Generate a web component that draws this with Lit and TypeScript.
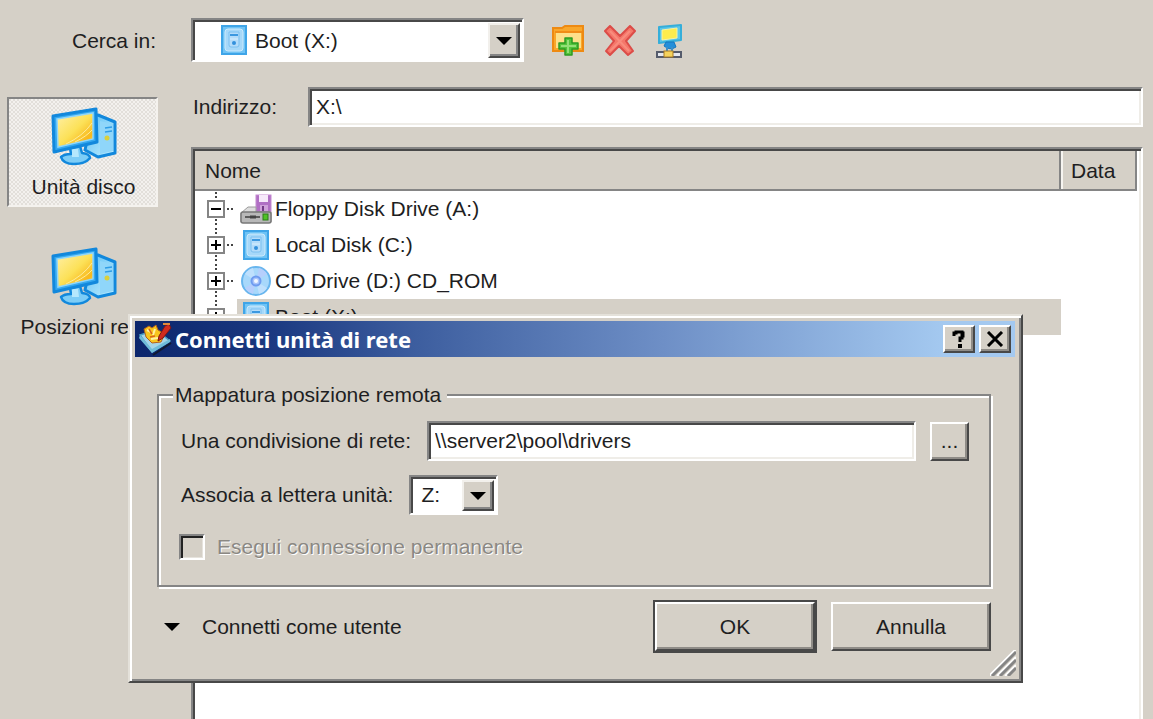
import { LitElement, html, svg, css } from "lit";
import { customElement, state } from "lit/decorators.js";
import { classMap } from "lit/directives/class-map.js";

type DriveKind = "floppy" | "disk" | "cd";
interface Drive {
  name: string;
  kind: DriveKind;
  open: boolean;
}

const computerIcon = html`<svg width="66" height="60" viewBox="0 0 66 60" aria-hidden="true">
  <defs>
    <linearGradient id="screen" x1="0" y1="0" x2="1" y2="1">
      <stop offset="0" stop-color="#fff0a8" />
      <stop offset=".5" stop-color="#fce158" />
      <stop offset=".8" stop-color="#f8b81c" />
      <stop offset="1" stop-color="#fbe06a" />
    </linearGradient>
    <linearGradient id="tower" x1="0" y1="0" x2="1" y2="1">
      <stop offset="0" stop-color="#58bdf4" />
      <stop offset="1" stop-color="#c4f0ff" />
    </linearGradient>
  </defs>
  <path d="M42 8 L47 8 L64 15 V46 L47 50 L34 43 Z" fill="url(#tower)" stroke="#1288dc" stroke-width="3" stroke-linejoin="round" />
  <path d="M49 14 L62 17 V44 L49 47 Z" fill="#8fd6fa" />
  <path d="M54 21 L61 20 M54 25 L61 24" stroke="#2f9de6" stroke-width="1.5" />
  <circle cx="56" cy="31" r="2.5" fill="#d9cf3c" />
  <path d="M19 41 L29 39 L31 46 Q39 47 39 51 Q34 57 23 57 Q12 57 10 50 Q13 47 20 47 Z" fill="#7dcdf7" stroke="#1288dc" stroke-width="2.5" stroke-linejoin="round" />
  <path d="M21 42 H27 L28 50 H21 Z" fill="#b6e8fd" />
  <path d="M2 9 L45 2 L46 35 L3 45 Z" fill="#35a9f0" stroke="#1288dc" stroke-width="3" stroke-linejoin="round" />
  <path d="M6 12 L42 6 L42 32 L7 40 Z" fill="url(#screen)" stroke="#8fd6fb" stroke-width="1.5" />
  <path d="M15 37 Q32 29 41 16 M24 35 Q36 29 41 23" stroke="#fdeb9a" stroke-width="1" fill="none" />
</svg>`;

const diskIcon = html`<svg width="26" height="30" viewBox="0 0 26 30" aria-hidden="true">
  <rect x="1" y="1" width="24" height="28" fill="#6fc3f5" stroke="#3fa5e8" stroke-width="2" />
  <rect x="4" y="4" width="18" height="22" rx="3" fill="#a6d8f9" stroke="#cdeafc" />
  <path d="M8 7 H18 V20 Q18 22 16 22 H10 Q8 22 8 20 Z" fill="#b4dcfa" stroke="#7cc0f0" />
  <path d="M9 10 H17" stroke="#3c98e0" stroke-width="2" />
  <path d="M9 14 H17" stroke="#d8eefd" />
  <circle cx="13" cy="18" r="2" fill="#3390dc" />
</svg>`;

const cdIcon = html`<svg width="30" height="30" viewBox="0 0 30 30" aria-hidden="true">
  <circle cx="15" cy="15" r="14" fill="#a8d8fb" stroke="#69b6ee" stroke-width="2" />
  <path d="M15 15 L4 8 A13 13 0 0 1 12 2 Z M15 15 L26 22 A13 13 0 0 1 18 28 Z" fill="#bfe0fd" />
  <path d="M15 15 L18 2 A13 13 0 0 1 26 8 Z M15 15 L4 22 A13 13 0 0 0 12 28 Z" fill="#b6cffc" />
  <circle cx="15" cy="15" r="4.5" fill="#aac4fa" stroke="#6f9cf0" stroke-width="2" />
  <circle cx="15" cy="15" r="2" fill="#f2f8ff" />
</svg>`;

const floppyIcon = html`<svg width="32" height="30" viewBox="0 0 32 30" aria-hidden="true">
  <rect x="16" y="1" width="15" height="17" fill="#b070c4" stroke="#c58ad2" />
  <rect x="19" y="1" width="9" height="7" fill="#f6e9fa" />
  <rect x="20" y="11" width="8" height="6" fill="#cfa1da" />
  <rect x="22" y="12" width="2" height="5" fill="#733b86" />
  <path d="M1 19 L8 13 H16 V18 H31 V28 H1 Z" fill="#dcdcdc" stroke="#9c9c9c" stroke-linejoin="round" />
  <rect x="1" y="18" width="30" height="11" rx="2" fill="#b8b8b8" stroke="#787878" stroke-width="1.5" />
  <path d="M5 23 H20" stroke="#5c5c5c" stroke-width="2" />
  <path d="M10 23 H16" stroke="#444" stroke-width="3" />
  <rect x="23" y="20" width="5" height="6" fill="#4fc226" stroke="#2d7d18" />
</svg>`;

const driveIcons = { floppy: floppyIcon, disk: diskIcon, cd: cdIcon };

const newFolderIcon = html`<svg width="32" height="32" viewBox="0 0 32 32" aria-hidden="true">
  <path d="M1 26 V3 H10 L13 1 H31 V26 Z" fill="#f9a72b" stroke="#ee8a12" stroke-width="2" />
  <path d="M4 8 H29 V23 H4 Z" fill="#fde08a" />
  <path d="M3 7 H30" stroke="#f08c17" stroke-width="2" />
  <path d="M13 13 H20 V18 H26 V24 H20 V30 H13 V24 H7 V18 H13 Z" fill="#54c43c" stroke="#2b9a22" stroke-width="1.5" stroke-linejoin="round" />
  <path d="M16 15 V28 M9 21 H24" stroke="#93e078" stroke-width="2" />
</svg>`;

const deleteIcon = html`<svg width="32" height="32" viewBox="0 0 32 32" aria-hidden="true">
  <path d="M1 6 L6 1 L16 11 L26 1 L31 6 L22 16 L29 26 L24 30 L15 21 L6 30 L2 26 L10 16 Z" fill="#f4776a" stroke="#dc4c48" stroke-width="2" stroke-linejoin="round" />
  <path d="M6 6 L25 26 M26 6 L6 26" stroke="#f98c7e" stroke-width="2" />
</svg>`;

const networkIcon = html`<svg width="26" height="34" viewBox="0 0 26 34" aria-hidden="true">
  <path d="M3 3 L25 1 V16 L3 19 Z" fill="#5cc7ea" stroke="#35aeda" stroke-width="2" stroke-linejoin="round" />
  <path d="M6 6 L21 4 V14 L6 16 Z" fill="#fdec4c" stroke="#f7f3a4" />
  <path d="M10 18 H18 L20 23 Q14 27 8 22 Z" fill="#248fda" stroke="#1776bd" />
  <path d="M11 23 V28 M16 23 V28" stroke="#3c8fc8" stroke-width="2" fill="none" />
  <rect x="1" y="28" width="24" height="5" fill="#e5e8ef" stroke="#555b6b" stroke-width="2" />
  <rect x="8" y="27" width="9" height="6" fill="#f6d35c" stroke="#a97b24" />
</svg>`;

const appIcon = html`<svg width="34" height="34" viewBox="0 0 34 34" aria-hidden="true">
  <path d="M2 13 L18 8 L32 19 L14 30 Z" fill="#a5d5e8" stroke="#4b9fc4" stroke-width="1.5" />
  <path d="M2 13 L14 27 L14 31 L1 16 Z M14 27 L32 17 L32 20 L14 31 Z" fill="#6fbcd8" />
  <path d="M15 33 L33 21" stroke="#111a30" stroke-width="2" />
  <path d="M6 7 L11 4 L14 6 L18 3 L20 8 L27 12 L23 20 L14 21 L8 15 Z" fill="#f8c51e" stroke="#b5611c" />
  <path d="M9 8 L13 10 M17 7 L15 13 M13 17 L20 16" stroke="#fff3a4" stroke-width="2" />
  <path d="M11 7 L14 12 M17 14 L12 15" stroke="#d8641c" stroke-width="1.5" />
  <path d="M31 2 L33 6 L25 16 L20 19 L21 14 L27 4 Z" fill="#d02b1e" stroke="#7d1717" />
  <path d="M25 2 L32 2" stroke="#e08a3c" stroke-width="2" />
</svg>`;

@customElement("app-root")
export class AppRoot extends LitElement {
  static styles = css`
    :host {
      --face: #d5d0c7;
      --shade: #858585;
      --dark: #484848;
      --ink: #1e1e22;
      display: block;
      position: relative;
      height: 100vh;
      overflow: hidden;
      background: var(--face);
      color: var(--ink);
      font: 21px/24px "Liberation Sans", Arial, sans-serif;
    }
    * { box-sizing: border-box; }
    button, input, select { font: inherit; color: inherit; border-radius: 0; margin: 0; }
    button { padding: 0; background: none; border: 0; }
    svg { display: block; flex: none; }

    .browser {
      display: grid;
      grid-template-columns: 158px 1fr;
      grid-template-rows: 69px 1fr;
      column-gap: 33px;
      height: 100%;
      padding: 18px 10px 0 0;
    }
    .look-label { justify-self: end; padding-right: 2px; line-height: 46px; }
    .look { display: flex; align-items: flex-start; }
    .tools { display: flex; gap: 20px; padding: 6px 0 0 28px; }

    .combo {
      display: flex;
      position: relative;
      background: #fff;
      border: 2px solid;
      border-color: var(--shade) #fff #fff var(--shade);
      box-shadow: inset 2px 2px var(--dark);
    }
    .combo select {
      appearance: none;
      width: 100%;
      border: 0;
      background: none;
      outline: none;
    }
    .combo-icon { position: absolute; left: 28px; top: 5px; pointer-events: none; }
    .combo-arrow {
      position: absolute;
      right: 2px;
      top: 3px;
      bottom: 2px;
      display: grid;
      place-items: center;
      width: 32px;
      background: var(--face);
      border: 2px solid;
      border-color: #f2f0ec var(--dark) var(--dark) #f2f0ec;
      box-shadow: inset -2px -2px var(--shade);
      pointer-events: none;
    }
    .drive-combo { width: 333px; height: 44px; }
    .drive-combo select { padding: 2px 34px 0 62px; }

    .places { display: flex; flex-direction: column; gap: 30px; padding: 10px 0 0 7px; }
    .place {
      display: flex;
      flex-direction: column;
      align-items: center;
      gap: 8px;
      height: 110px;
      padding: 8px 0 0 2px;
      border: 2px solid transparent;
      white-space: nowrap;
    }
    .place.current {
      border-color: var(--shade) #f4f2ee #f4f2ee var(--shade);
      background: repeating-conic-gradient(#f3f1ee 0 25%, #e2dfda 0 50%) 0 0 / 4px 4px;
    }

    .content { display: flex; flex-direction: column; gap: 20px; min-height: 0; }
    .address { display: flex; align-items: center; padding-left: 2px; }
    .address label { width: 115px; }
    .field {
      flex: 1;
      min-width: 0;
      height: 40px;
      padding: 0 6px;
      background: #fff;
      border: 2px solid;
      border-color: var(--shade) #fff #fff var(--shade);
      box-shadow: inset 2px 2px var(--dark), inset -2px -2px #efede8;
      outline: none;
    }

    .list {
      flex: 1;
      padding: 2px 4px 0 2px;
      background: #fff;
      border: 2px solid;
      border-color: var(--shade) #fff #fff var(--shade);
      border-bottom: 0;
      box-shadow: inset 2px 2px var(--dark), inset -2px 0 #efede8;
    }
    table { width: 100%; border-collapse: separate; border-spacing: 0; table-layout: fixed; }
    th {
      height: 40px;
      padding: 2px 10px 0;
      text-align: left;
      font-weight: normal;
      background: var(--face);
      border-bottom: 2px solid var(--shade);
      border-right: 2px solid var(--shade);
      box-shadow: inset 2px 0 #f6f4f0;
    }
    th:first-child { box-shadow: none; }
    .date { width: 76px; }
    td { padding: 0; }
    .node { display: flex; height: 36px; white-space: nowrap; }
    .name { display: flex; flex: 1; align-items: center; gap: 4px; padding: 0 4px; }
    .glyph { display: flex; justify-content: center; width: 30px; }
    .selected .name { background: var(--face); }

    .dialog {
      position: absolute;
      left: 128px;
      right: 130px;
      top: 314px;
      padding: 5px 6px 28px 5px;
      background: var(--face);
      border: 2px solid;
      border-color: #e4e1da var(--dark) var(--dark) #e4e1da;
      box-shadow: inset 2px 2px #fff, inset -2px -2px var(--shade);
    }
    .title {
      display: flex;
      align-items: center;
      gap: 3px;
      height: 36px;
      padding: 0 4px 0 3px;
      background: linear-gradient(90deg, #0c266c, #1a3880 15%, #3d5e9f 32%, #6e8fc6 60%, #a4c9f0 92%);
    }
    .title h1 {
      flex: 1;
      margin: 0;
      color: #fff;
      font: bold 22px/32px "Noto Sans", "Open Sans", sans-serif;
      white-space: nowrap;
    }
    .push {
      display: grid;
      place-items: center;
      background: var(--face);
      border: 2px solid;
      border-color: #fff var(--dark) var(--dark) #fff;
      box-shadow: inset -2px -2px #8f8c87;
    }
    .captions { display: flex; gap: 4px; }
    .caption { width: 32px; height: 28px; }

    .form { padding: 26px 24px 0 22px; }
    fieldset {
      display: flex;
      flex-direction: column;
      gap: 14px;
      min-width: 0;
      margin: 0;
      padding: 14px 20px 20px;
      border: 2px solid var(--shade);
      box-shadow: 2px 2px #fff, inset 2px 2px #fff;
    }
    legend { margin-left: -6px; padding: 0 6px 0 2px; background: var(--face); }
    .row { display: flex; align-items: center; gap: 14px; padding-left: 2px; white-space: nowrap; }
    .row label { padding-right: 2px; }
    .letter-combo { width: 89px; height: 40px; }
    .letter-combo select { padding: 0 34px 0 10px; }
    .browse { width: 39px; height: 39px; }
    .persist { height: 36px; gap: 12px; padding-left: 0; color: #8b8883; text-shadow: 1px 1px #fff; }
    .persist input {
      appearance: none;
      width: 26px;
      height: 26px;
      border: 2px solid;
      border-color: var(--shade) #fff #fff var(--shade);
      box-shadow: inset 2px 2px #222, inset -1px -1px #e6e3dd;
    }
    .actions { display: flex; align-items: center; gap: 14px; padding-top: 13px; }
    .expand { display: flex; flex: 1; align-items: center; gap: 22px; padding-left: 7px; }
    .answer { width: 160px; height: 49px; }
    .default { padding: 2px; background: var(--dark); }
    .grip { position: absolute; right: 5px; bottom: 5px; }
  `;

  @state() private drives: Drive[] = [
    { name: "Floppy Disk Drive (A:)", kind: "floppy", open: true },
    { name: "Local Disk (C:)", kind: "disk", open: false },
    { name: "CD Drive (D:) CD_ROM", kind: "cd", open: false },
    { name: "Boot (X:)", kind: "disk", open: false },
  ];
  @state() private selected = 3;
  @state() private place = 0;

  private toggle(index: number) {
    this.drives = this.drives.map((d, i) => (i === index ? { ...d, open: !d.open } : d));
  }

  private arrow() {
    return html`<svg width="16" height="8" viewBox="0 0 16 8" aria-hidden="true"><path d="M0 0 H16 L8 8 Z" fill="#000" /></svg>`;
  }

  private expander(open: boolean) {
    return html`<svg width="42" height="36" viewBox="0 0 42 36" aria-hidden="true">
      <path d="M21 1 V9 M21 28 V36" stroke="#444" stroke-width="2" stroke-dasharray="2 2" />
      <path d="M32 18 H38" stroke="#444" stroke-width="2" stroke-dasharray="2 2" />
      <rect x="13" y="10" width="16" height="16" fill="#fff" stroke="#858585" stroke-width="2" />
      <path d="M16 18 H26" stroke="#000" stroke-width="2" />
      ${open ? "" : svg`<path d="M21 13 V23" stroke="#000" stroke-width="2" />`}
    </svg>`;
  }

  render() {
    return html`
      <main class="browser">
        <label class="look-label" for="drive">Cerca in:</label>
        <div class="look">
          <div class="combo drive-combo">
            <span class="combo-icon">${diskIcon}</span>
            <select id="drive"><option>Boot (X:)</option></select>
            <span class="combo-arrow">${this.arrow()}</span>
          </div>
          <div class="tools">
            <button aria-label="Nuova cartella">${newFolderIcon}</button>
            <button aria-label="Elimina">${deleteIcon}</button>
            <button aria-label="Connetti unità di rete">${networkIcon}</button>
          </div>
        </div>
        <nav class="places">
          ${["Unità disco", "Posizioni rete"].map(
            (name, i) => html`<button class=${classMap({ place: true, current: i === this.place })} @click=${() => (this.place = i)}>
              ${computerIcon}<span>${name}</span>
            </button>`
          )}
        </nav>
        <section class="content">
          <div class="address">
            <label for="path">Indirizzo:</label>
            <input class="field" id="path" .value=${"X:\\"} />
          </div>
          <div class="list">
            <table>
              <thead><tr><th>Nome</th><th class="date">Data</th></tr></thead>
              <tbody>
                ${this.drives.map(
                  (d, i) => html`<tr @click=${() => (this.selected = i)}>
                    <td>
                      <div class=${classMap({ node: true, selected: i === this.selected })}>
                        <button aria-label=${d.name} aria-expanded=${d.open} @click=${() => this.toggle(i)}>${this.expander(d.open)}</button>
                        <span class="name"><span class="glyph">${driveIcons[d.kind]}</span>${d.name}</span>
                      </div>
                    </td>
                    <td></td>
                  </tr>`
                )}
              </tbody>
            </table>
          </div>
        </section>
      </main>

      <section class="dialog" role="dialog" aria-labelledby="dialog-title">
        <header class="title">
          ${appIcon}
          <h1 id="dialog-title">Connetti unità di rete</h1>
          <div class="captions">
            <button class="push caption" aria-label="Guida">
              <svg width="16" height="18" viewBox="0 0 16 18"><path d="M3 6 V3 H5 V2 H11 V3 H12 V6 H11 V8 H9 V12" fill="none" stroke="#000" stroke-width="3" /><path d="M7 14 H11 V18 H7 Z" /></svg>
            </button>
            <button class="push caption" aria-label="Chiudi">
              <svg width="18" height="16" viewBox="0 0 18 16"><path d="M2 1 L16 15 M16 1 L2 15" stroke="#000" stroke-width="3" /></svg>
            </button>
          </div>
        </header>
        <div class="form">
          <fieldset>
            <legend>Mappatura posizione remota</legend>
            <div class="row">
              <label for="share">Una condivisione di rete:</label>
              <input class="field" id="share" .value=${"\\\\server2\\pool\\drivers"} />
              <button class="push browse">...</button>
            </div>
            <div class="row">
              <label for="letter">Associa a lettera unità:</label>
              <div class="combo letter-combo">
                <select id="letter"><option>Z:</option></select>
                <span class="combo-arrow">${this.arrow()}</span>
              </div>
            </div>
            <div class="row persist">
              <input type="checkbox" id="persist" disabled />
              <label for="persist">Esegui connessione permanente</label>
            </div>
          </fieldset>
          <div class="actions">
            <button class="expand">${this.arrow()}<span>Connetti come utente</span></button>
            <div class="default"><button class="push answer">OK</button></div>
            <button class="push answer">Annulla</button>
          </div>
        </div>
        <svg class="grip" width="26" height="26" viewBox="0 0 26 26" aria-hidden="true">
          <path d="M-1 26 L26 -1 M7 26 L26 7 M15 26 L26 15" stroke="#fff" stroke-width="2" />
          <path d="M2 26 L26 2 M10 26 L26 10 M18 26 L26 18" stroke="#858585" stroke-width="3" />
        </svg>
      </section>
    `;
  }
}
